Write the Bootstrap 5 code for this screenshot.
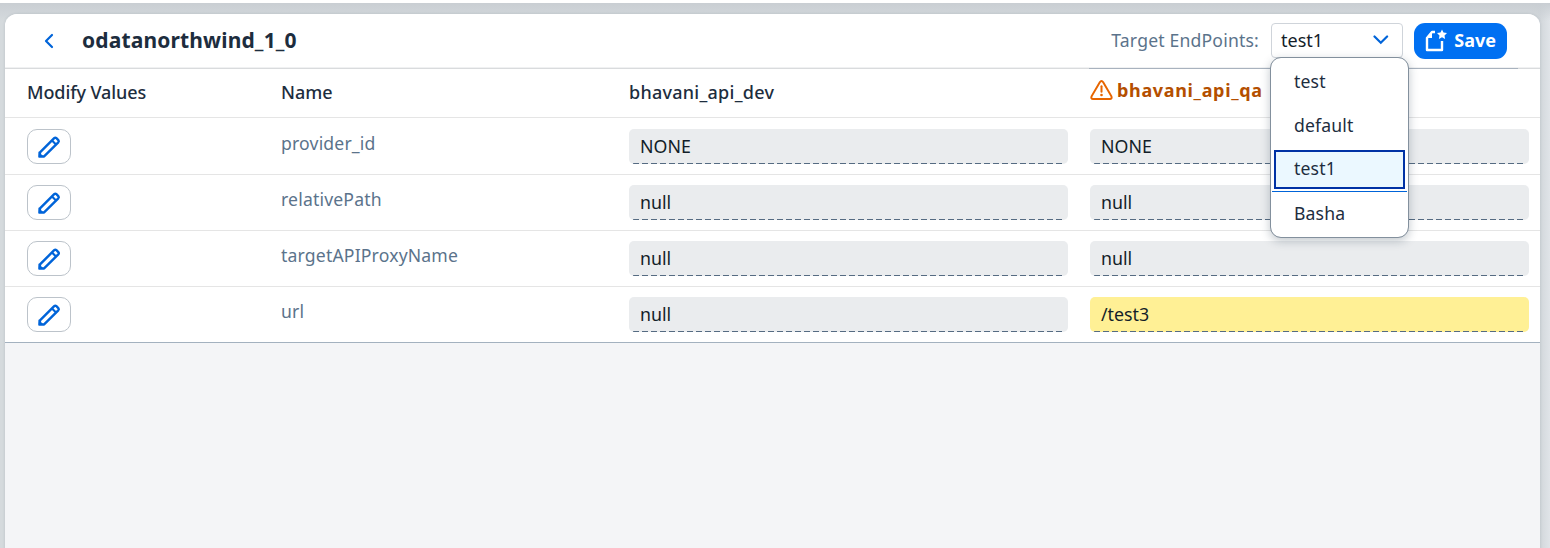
<!DOCTYPE html>
<html lang="en">
<head>
<meta charset="utf-8">
<meta name="viewport" content="width=device-width, initial-scale=1">
<title>odatanorthwind_1_0</title>
<link href="https://cdn.jsdelivr.net/npm/bootstrap@5.3.0/dist/css/bootstrap.min.css" rel="stylesheet">
<style>
  body { font-family: "Noto Sans", "Open Sans", sans-serif; font-size: 18px; line-height: 24px; color: #1d2d3e; height: 548px; overflow: hidden;
    background: linear-gradient(#c9ced3 0, rgba(201,206,211,0) 18px) 0 3px no-repeat, linear-gradient(90deg, #d5dadd 0, #d5dadd 1530px, #d2d7db 1540px, #e0e4e8 1550px); }
  .shell-edge { height: 3px; }
  .panel { margin: 11px 10px 0 5px; height: 540px; border-radius: 12px 12px 0 0; background: #f4f5f7; box-shadow: 0 0 3px rgba(34,53,72,.15); }
  .panel-head { height: 55px; border-bottom: 1px solid #d9dbdd; box-shadow: inset 0 -1px #f0f1f2; border-radius: 12px 12px 0 0; padding: 0 33px 1px 39px; }
  .page-title { font-size: 21px; font-weight: 700; margin-left: 28px; padding-top: 1px; letter-spacing: .15px; }
  .endpoint-label { color: #5b738b; font-size: 17.6px; letter-spacing: .18px; margin-right: 12px; padding-bottom: 1px; }
  .endpoint-wrap { margin-right: 11px; }
  .endpoint-select { width: 132px; height: 35px; border: 1px solid #cfd4da; border-radius: 4px; padding: 0 13px 1px 9px; color: #131e29; }
  .save-btn { width: 93px; height: 36px; border-radius: 11px; background: #0070f2; color: #fff; font-size: 18px; font-weight: 700; padding: 0 10px; }
  .endpoint-menu { top: 34px; left: -1px; width: 139px; height: 181px; min-width: 0; padding: 2px 0; border: 1px solid #83909d; border-radius: 11px; font-size: 17.6px; letter-spacing: .15px; box-shadow: 0 3px 10px rgba(34,53,72,.28); }
  .endpoint-menu li { height: 44px; padding: 0 23px 2px; display: flex; align-items: center; color: #1d2d3e; }
  .endpoint-menu li.chosen { height: 44px; padding: 2px 1px 0 2px; border-bottom: 1px solid #0064d9; margin: 0 1px; align-items: flex-start; }
  .chosen-box { width: 131px; height: 39px; background: #ebf8ff; border: 2px solid #0032a5; padding: 4px 17px 0 18px; }
  .props { table-layout: fixed; margin: 0; background: #fff; border-collapse: separate; border-spacing: 0; border-bottom: 1px solid #a3b1bf; color: #1d2d3e; }
  .props th { height: 49px; padding: 0 11px 2px; font-weight: 500; border-bottom: 1px solid #e5e5e5; vertical-align: middle; background: none; }
  .props td { height: 56px; padding: 10px 11px; vertical-align: top; border-bottom: 1px solid #e5e5e5; background: none; }
  .props tbody tr:first-child td { height: 57px; padding-top: 11px; }
  .props tbody tr:last-child td { height: 55px; border-bottom: 0; }
  .props th:first-child, .props td:first-child { padding-left: 22px; }
  .props th:first-child { letter-spacing: -.1px; }
  .props th.env { letter-spacing: .26px; }
  .props th.changed { color: #b44f00; font-weight: 700; padding-bottom: 6px; position: relative; letter-spacing: .66px; }
  .props th.changed::before { content: ""; position: absolute; top: -1px; left: 10px; width: 429px; height: 1px; background: #a8b2be; }
  .prop-name { color: #5b738b; padding-top: 2px; font-size: 17.6px; letter-spacing: .17px; }
  .edit-btn { width: 44px; height: 35px; border: 1px solid #bcc3ca; border-radius: 10px; background: #fff; padding: 0; }
  .value-box { height: 35px; padding: 5px 11px; border-radius: 5px; color: #131e29; background: repeating-linear-gradient(90deg, #556b82 0 6px, transparent 6px 9px) 4px 34px / calc(100% - 8px) 1px no-repeat #eaecee; font-size: 17.8px; }
  .value-box.diff { background-color: #fff095; }
</style>
</head>
<body>
<svg class="d-none">
  <symbol id="pencil" viewBox="0 0 24 24"><path d="M2.6 21.4 3 17.4 17.2 3.2Q18.3 2.2 19.4 3.2L21.3 5.1Q22.3 6.2 21.3 7.3L7.1 21.4Z" fill="none" stroke="#0064d9" stroke-width="2.4" stroke-linejoin="round"/><path d="M1.5 22.5v-6l6 6z" fill="#0064d9"/><path d="m15 5.5 4 4" fill="none" stroke="#0064d9" stroke-width="2.2"/></symbol>
</svg>
<div class="shell-edge bg-white"></div>
<main class="panel">
  <header class="panel-head bg-white d-flex align-items-center">
    <svg width="10" height="16" viewBox="0 0 10 16"><path d="M8 2 2 8l6 6" fill="none" stroke="#0064d9" stroke-width="2.2" stroke-linecap="round" stroke-linejoin="round"/></svg>
    <h1 class="page-title mb-0 me-auto">odatanorthwind_1_0</h1>
    <span class="endpoint-label">Target EndPoints:</span>
    <div class="position-relative endpoint-wrap">
      <div class="endpoint-select bg-white d-flex align-items-center justify-content-between"><span>test1</span>
        <svg width="16" height="10" viewBox="0 0 16 10"><path d="m1.5 1.5 6.3 6.3 6.3-6.3" fill="none" stroke="#0064d9" stroke-width="2.2" stroke-linecap="round"/></svg>
      </div>
      <ul class="dropdown-menu show endpoint-menu">
        <li>test</li><li>default</li><li class="chosen"><div class="chosen-box">test1</div></li><li>Basha</li>
      </ul>
    </div>
    <button class="btn save-btn d-flex align-items-center justify-content-between">
      <svg width="23" height="24" viewBox="0 0 23 24"><path d="M10 3H7L2 9v12h15V12" fill="none" stroke="#fff" stroke-width="2.4" stroke-linejoin="round"/><path d="M7 2v7H1z" fill="#fff"/><path d="m17 .5 1.5 3 3.5.4-2.5 2.5.6 3.5L17 8.3l-3.1 1.6.6-3.5L12 3.9l3.5-.4z" fill="#fff"/></svg>
      <span>Save</span>
    </button>
  </header>
  <table class="table props">
    <colgroup><col style="width:265px"><col style="width:348px"><col style="width:461px"><col style="width:461px"></colgroup>
    <thead><tr><th>Modify Values</th><th>Name</th><th class="env">bhavani_api_dev</th>
      <th class="changed"><div class="d-flex align-items-center gap-1"><svg width="23" height="20" viewBox="0 0 23 20"><path d="M9.8 2.3Q11.5-.2 13.2 2.3L21.3 16.1Q22.4 18.8 19.7 19H3.2Q.5 18.8 1.7 16.1Z" fill="none" stroke="#e76500" stroke-width="2"/><path d="M11.5 6.2v5.5" stroke="#e76500" stroke-width="2" stroke-linecap="round"/><circle cx="11.5" cy="15" r="1.3" fill="#e76500"/></svg><span>bhavani_api_qa</span></div></th></tr></thead>
    <tbody>
      <tr><td><button class="btn edit-btn d-flex align-items-center justify-content-center"><svg width="24" height="24"><use href="#pencil"/></svg></button></td><td><div class="prop-name">provider_id</div></td><td><div class="value-box">NONE</div></td><td><div class="value-box">NONE</div></td></tr>
      <tr><td><button class="btn edit-btn d-flex align-items-center justify-content-center"><svg width="24" height="24"><use href="#pencil"/></svg></button></td><td><div class="prop-name">relativePath</div></td><td><div class="value-box">null</div></td><td><div class="value-box">null</div></td></tr>
      <tr><td><button class="btn edit-btn d-flex align-items-center justify-content-center"><svg width="24" height="24"><use href="#pencil"/></svg></button></td><td><div class="prop-name">targetAPIProxyName</div></td><td><div class="value-box">null</div></td><td><div class="value-box">null</div></td></tr>
      <tr><td><button class="btn edit-btn d-flex align-items-center justify-content-center"><svg width="24" height="24"><use href="#pencil"/></svg></button></td><td><div class="prop-name">url</div></td><td><div class="value-box">null</div></td><td><div class="value-box diff">/test3</div></td></tr>
    </tbody>
  </table>
</main>
<script src="https://cdn.jsdelivr.net/npm/bootstrap@5.3.0/dist/js/bootstrap.bundle.min.js"></script>
</body>
</html>
